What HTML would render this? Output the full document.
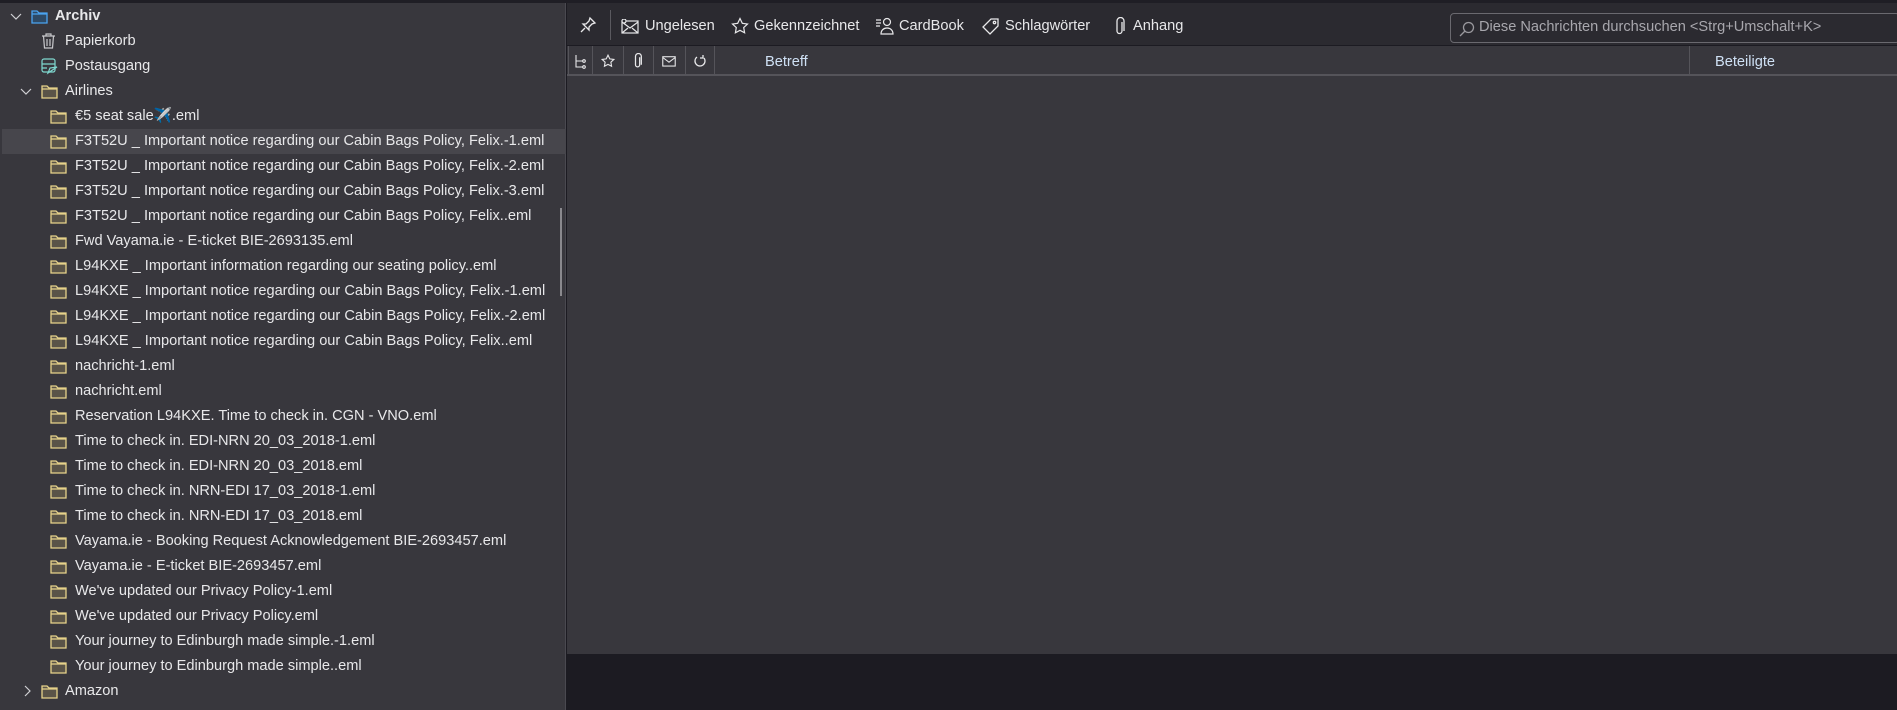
<!DOCTYPE html>
<html><head><meta charset="utf-8"><style>
*{margin:0;padding:0;box-sizing:border-box}
body{width:1897px;height:710px;background:#1c1b22;font-family:"Segoe UI","Liberation Sans",sans-serif;color:#e8e8ea;overflow:hidden;position:relative}
.top{position:absolute;left:0;top:0;width:1897px;height:3px;background:#1f1e25}
.left{position:absolute;left:0;top:3px;width:566px;height:707px;background:#38373d;border-right:1px solid #4a4950}
.row{position:absolute;left:0;width:566px;height:25px;font-size:14.6px;line-height:25px;white-space:nowrap}
.row.sel{background:#47464c}
.row span{position:absolute;top:0}
.chev{position:absolute;top:6px}
.right{position:absolute;left:567px;top:3px;width:1330px}
.tb{height:43px;background:#2b2a30;border-bottom:1px solid #1c1b22;position:relative;font-size:14.6px}
.tb span{position:absolute;top:15px}
.tb svg{position:absolute}
.hdr{height:30px;background:#38373d;border-bottom:2px solid #55545a;position:relative;font-size:14.6px;color:#cfe1f5}
.hdr .sep{position:absolute;top:0;width:1px;height:28px;background:#55545a}
.list{height:578px;background:#38373d}
</style></head><body>
<div class="top"></div>
<div class="left">
<div style="position:absolute;left:560px;top:205px;width:2px;height:88px;background:#8a898e"></div>
</div>
<div id="tree"></div>
<div class="right">
 <div class="tb">
  <svg style="left:12px;top:13px" width="18" height="18" viewBox="0 0 18 18" fill="none" stroke="#e8e8ea" stroke-width="1.3"><path d="M11 2l5 5-3 1-3 3 0 3-6-6 3 0 3-3z M6 12l-4 4"/></svg>
  <div style="position:absolute;left:43px;top:7px;width:1px;height:30px;background:#5a595f"></div>
  <svg style="left:54px;top:16px" width="18" height="15" viewBox="0 0 18 15" fill="none" stroke="#e8e8ea" stroke-width="1.2"><rect x="1" y="2" width="16" height="12"/><path d="M1 3l8 6 8-6M1 14l6-5M17 14l-6-5"/><circle cx="3" cy="2" r="2" fill="#2b2a30"/></svg>
  <span style="left:78px">Ungelesen</span>
  <svg style="left:164px;top:14px" width="18" height="18" viewBox="0 0 18 18" fill="none" stroke="#e8e8ea" stroke-width="1.2"><path d="M9 1.5l2.3 4.8 5.2.7-3.8 3.6.9 5.2L9 13.3 4.4 15.8l.9-5.2L1.5 7l5.2-.7z"/></svg>
  <span style="left:187px">Gekennzeichnet</span>
  <svg style="left:308px;top:14px" width="20" height="18" viewBox="0 0 20 18" fill="none" stroke="#e8e8ea" stroke-width="1.2"><path d="M1 3h5M1 6h5M1 9h4"/><circle cx="12" cy="5" r="3.5"/><path d="M6 17c0-4 3-6 6-6s6 2 6 6z"/></svg>
  <span style="left:332px">CardBook</span>
  <svg style="left:414px;top:14px" width="19" height="19" viewBox="0 0 19 19" fill="none" stroke="#e8e8ea" stroke-width="1.3"><path d="M10 2h7v7l-8 8-7-7z"/><circle cx="13.5" cy="5.5" r="1.2"/></svg>
  <span style="left:438px">Schlagwörter</span>
  <svg style="left:547px;top:14px" width="12" height="19" viewBox="0 0 12 19" fill="none" stroke="#e8e8ea" stroke-width="1.3"><path d="M8 5v9a2.5 2.5 0 01-5 0V4a3.5 3.5 0 017 0v10"/></svg>
  <span style="left:566px">Anhang</span>
  <div style="position:absolute;left:883px;top:10px;width:450px;height:30px;border:1px solid #6a696f;border-radius:4px;background:#2b2a30"></div>
  <svg style="left:892px;top:18px" width="16" height="16" viewBox="0 0 16 16" fill="none" stroke="#9a999e" stroke-width="1.3"><circle cx="9.5" cy="6.5" r="5"/><path d="M6 10l-5 5"/></svg>
  <span style="left:912px;top:16px;color:#a8a7ad">Diese Nachrichten durchsuchen &lt;Strg+Umschalt+K&gt;</span>
 </div>
 <div class="hdr">
  <div class="sep" style="left:1px"></div><div class="sep" style="left:25px"></div><div class="sep" style="left:56px"></div><div class="sep" style="left:86px"></div><div class="sep" style="left:118px"></div><div class="sep" style="left:147px"></div><div class="sep" style="left:1122px"></div>
  <svg style="position:absolute;left:7px;top:8px" width="12" height="15" viewBox="0 0 12 15" fill="none" stroke="#e8e8ea" stroke-width="1.1"><path d="M2 1v12h7M2 7h7"/><circle cx="10" cy="7" r="1.3"/><circle cx="10" cy="13" r="1.3"/></svg>
  <svg style="position:absolute;left:34px;top:8px" width="14" height="14" viewBox="0 0 18 18" fill="none" stroke="#e8e8ea" stroke-width="1.4"><path d="M9 1.5l2.3 4.8 5.2.7-3.8 3.6.9 5.2L9 13.3 4.4 15.8l.9-5.2L1.5 7l5.2-.7z"/></svg>
  <svg style="position:absolute;left:66px;top:7px" width="10" height="16" viewBox="0 0 12 19" fill="none" stroke="#e8e8ea" stroke-width="1.5"><path d="M8 5v9a2.5 2.5 0 01-5 0V4a3.5 3.5 0 017 0v10"/></svg>
  <svg style="position:absolute;left:95px;top:9px" width="14" height="12" viewBox="0 0 18 15" fill="none" stroke="#e8e8ea" stroke-width="1.4"><rect x="1" y="2" width="16" height="12"/><path d="M1 3l8 6 8-6"/></svg>
  <svg style="position:absolute;left:127px;top:8px" width="12" height="14" viewBox="0 0 12 14" fill="none" stroke="#e8e8ea" stroke-width="1.3"><path d="M3 3a5 5 0 107 1M9 1v3H6"/></svg>
  <span style="position:absolute;left:198px;top:8px">Betreff</span>
  <span style="position:absolute;left:1148px;top:8px">Beteiligte</span>
 </div>
 <div class="list"></div>
</div>
<script>
const fold=(c,f)=>`<svg width="17" height="15" viewBox="0 0 17 15" fill="${f}" stroke="${c}" stroke-width="1.3"><path d="M1 2h5l2 2h8v10H1z M1 5h15"/></svg>`;
const rows=[
[0,'Archiv','arch',true],[1,'Papierkorb','trash'],[1,'Postausgang','out'],[1,'Airlines','f',true],
[2,'€5 seat sale✈️.eml'],[2,'F3T52U _ Important notice regarding our Cabin Bags Policy, Felix.-1.eml',0,0,1],
[2,'F3T52U _ Important notice regarding our Cabin Bags Policy, Felix.-2.eml'],[2,'F3T52U _ Important notice regarding our Cabin Bags Policy, Felix.-3.eml'],
[2,'F3T52U _ Important notice regarding our Cabin Bags Policy, Felix..eml'],[2,'Fwd Vayama.ie - E-ticket BIE-2693135.eml'],
[2,'L94KXE _ Important information regarding our seating policy..eml'],[2,'L94KXE _ Important notice regarding our Cabin Bags Policy, Felix.-1.eml'],
[2,'L94KXE _ Important notice regarding our Cabin Bags Policy, Felix.-2.eml'],[2,'L94KXE _ Important notice regarding our Cabin Bags Policy, Felix..eml'],
[2,'nachricht-1.eml'],[2,'nachricht.eml'],[2,'Reservation L94KXE. Time to check in. CGN - VNO.eml'],
[2,'Time to check in. EDI-NRN 20_03_2018-1.eml'],[2,'Time to check in. EDI-NRN 20_03_2018.eml'],
[2,'Time to check in. NRN-EDI 17_03_2018-1.eml'],[2,'Time to check in. NRN-EDI 17_03_2018.eml'],
[2,'Vayama.ie - Booking Request Acknowledgement BIE-2693457.eml'],[2,'Vayama.ie - E-ticket BIE-2693457.eml'],
[2,"We've updated our Privacy Policy-1.eml"],[2,"We've updated our Privacy Policy.eml"],
[2,'Your journey to Edinburgh made simple.-1.eml'],[2,'Your journey to Edinburgh made simple..eml'],[1,'Amazon','f','closed']];
let h='';
rows.forEach((r,i)=>{
 const [lv,t,ic,ch,sel]=r;const top=4+i*25;
 const ix=[31,41,50][lv], tx=[55,65,75][lv];
 let icon;
 if(ic==='arch')icon=fold('#4aa3f0','#2e4a66');
 else if(ic==='trash')icon=`<svg width="15" height="16" viewBox="0 0 15 16" fill="none" stroke="#c8c8cc" stroke-width="1.2"><path d="M1 3h13M5 3V1h5v2M2.5 3l1 12h8l1-12M6 6v7M9 6v7"/></svg>`;
 else if(ic==='out')icon=`<svg width="17" height="17" viewBox="0 0 17 17" fill="none" stroke="#7fd8d0" stroke-width="1.2"><rect x="1" y="1" width="13" height="13" rx="2"/><path d="M1 6h13M1 10h5M7 15l9-6-7 1z"/></svg>`;
 else icon=fold('#e6d28a','#5a5448');
 let chev='';
 if(ch){const cx=lv===0?10:20;chev=ch==='closed'?`<svg class="chev" style="left:${cx+2}px" width="10" height="12" viewBox="0 0 10 12" fill="none" stroke="#d0d0d4" stroke-width="1.2"><path d="M3 1l5 5-5 5"/></svg>`:`<svg class="chev" style="left:${cx}px;top:8px" width="12" height="10" viewBox="0 0 12 10" fill="none" stroke="#d0d0d4" stroke-width="1.2"><path d="M1 2l5 5 5-5"/></svg>`;}
 h+=`<div class="row${sel?' sel':''}" style="top:${top}px;${sel?'left:2px;width:564px':''}">${chev}<div style="position:absolute;left:${ix-(sel?2:0)}px;top:4px">${icon}</div><span style="left:${tx-(sel?2:0)}px;${i===0?'font-weight:bold':''}">${t}</span></div>`;
});
document.getElementById('tree').innerHTML=h;
</script>
</body></html>
